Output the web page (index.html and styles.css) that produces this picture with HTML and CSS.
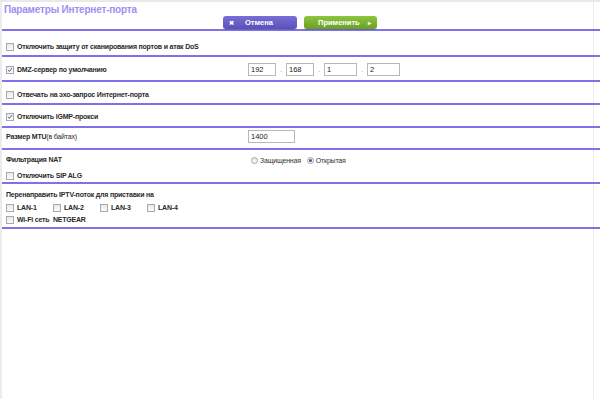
FILE: index.html
```html
<!DOCTYPE html>
<html lang="ru">
<head>
    <meta charset="UTF-8">
    <title>Параметры Интернет-порта</title>
    <link rel="stylesheet" href="styles.css">
</head>
<body>
    <div class="page">
        <div class="header">
            <h1 class="title">Параметры Интернет-порта</h1>
            <div class="button-bar">
                <button class="btn btn-cancel"><span class="btn-icon">&#x2716;</span>Отмена</button>
                <button class="btn btn-apply">Применить<span class="btn-arrow">&#x25B8;</span></button>
            </div>
        </div>

        <!-- DoS -->
        <div class="row row-dos">
            <label class="opt"><span class="check"></span>Отключить защиту от сканирования портов и атак DoS</label>
        </div>

        <!-- DMZ -->
        <div class="row row-dmz">
            <label class="opt"><span class="check on"><svg viewBox="0 0 8 8"><path d="M1.5 4.2 L3.2 6 L6.6 1.6" /></svg></span>DMZ-сервер по умолчанию</label>
            <div class="ip">
                <input class="field ip-a" type="text" value="192"><span class="dot">.</span>
                <input class="field ip-a" type="text" value="168"><span class="dot">.</span>
                <input class="field ip-b" type="text" value="1"><span class="dot">.</span>
                <input class="field ip-b" type="text" value="2">
            </div>
        </div>

        <div class="row row-echo">
            <label class="opt"><span class="check"></span>Отвечать на эхо-запрос Интернет-порта</label>
        </div>

        <div class="row row-igmp">
            <label class="opt"><span class="check on"><svg viewBox="0 0 8 8"><path d="M1.5 4.2 L3.2 6 L6.6 1.6" /></svg></span>Отключить IGMP-прокси</label>
        </div>

        <div class="row row-mtu">
            <span class="label">Размер MTU<span class="light">(в байтах)</span></span>
            <input class="field mtu" type="text" value="1400">
        </div>

        <!-- NAT -->
        <div class="row row-nat">
            <div class="nat-top">
                <span class="label">Фильтрация NAT</span>
                <div class="radios">
                    <label class="radio-opt"><span class="radio"></span>Защищенная</label>
                    <label class="radio-opt"><span class="radio on"></span>Открытая</label>
                </div>
            </div>
            <label class="opt"><span class="check"></span>Отключить SIP ALG</label>
        </div>

        <!-- IPTV -->
        <div class="row row-iptv">
            <span class="label">Перенаправить IPTV-поток для приставки на</span>
            <div class="lan-list">
                <label class="opt lan"><span class="check"></span>LAN-1</label>
                <label class="opt lan"><span class="check"></span>LAN-2</label>
                <label class="opt lan"><span class="check"></span>LAN-3</label>
                <label class="opt lan"><span class="check"></span>LAN-4</label>
            </div>
            <label class="opt"><span class="check"></span>Wi-Fi сеть&nbsp; NETGEAR</label>
        </div>
    </div>
</body>
</html>
```

FILE: styles.css
```css
:root {
    --line: #7d72ec;
    --title: #9d90f2;
    --text: #2a2a2a;
    --box: #b8b8b8;
}

* {
    margin: 0;
    padding: 0;
    box-sizing: border-box;
}

body {
    background: #fff;
    font-family: 'Liberation Sans', Arial, sans-serif;
    font-size: 7px;
    letter-spacing: -0.2px;
    color: var(--text);
}

.page {
    min-height: 399px;
    border-top: 2px solid #e9e9e9;
    border-left: 2px solid #ececec;
    box-shadow: inset -6px 0 0 #fff, inset -7px 0 0 #ececec;
}

.header {
    height: 29px;
    padding: 2px 0 0 2px;
    border-bottom: 2px solid var(--line);
}

.title {
    font-size: 10px;
    font-weight: bold;
    color: var(--title);
    line-height: 11px;
    letter-spacing: -0.2px;
}

.button-bar {
    display: flex;
    justify-content: center;
    gap: 7px;
    padding-right: 4px;
    margin-top: 1px;
}

.btn {
    height: 13px;
    border: none;
    border-radius: 3px;
    color: #fff;
    font-family: 'Liberation Sans', Arial, sans-serif;
    font-size: 7.5px;
    font-weight: bold;
    display: flex;
    align-items: center;
    box-shadow: 0 1px 0 rgba(0, 0, 0, 0.15);
}

.btn-cancel {
    width: 74px;
    padding-left: 6px;
    background: linear-gradient(#7a6fd6, #5b4fb8);
}

.btn-icon {
    font-size: 6px;
    margin-right: 11px;
}

.btn-apply {
    width: 73px;
    padding-left: 14px;
    background: linear-gradient(#8cc63f, #6a9f25);
}

.btn-arrow {
    font-size: 6px;
    margin-left: 8px;
}

.row {
    border-bottom: 2px solid var(--line);
    padding-left: 4px;
}

.row-dos { height: 26px; padding-top: 10px; }
.row-dmz { height: 25px; padding-top: 6px; display: grid; grid-template-columns: 242px 1fr; align-items: center; align-content: start; }
.row-echo { height: 23px; padding-top: 7px; }
.row-igmp { height: 23px; padding-top: 6px; }
.row-mtu { height: 22px; padding-top: 2px; display: grid; grid-template-columns: 242px 1fr; align-items: center; align-content: start; }
.row-nat { height: 34px; padding-top: 4px; }
.row-iptv { height: 45px; padding-top: 5px; }

.opt {
    display: flex;
    align-items: center;
    font-weight: bold;
    height: 12px;
    line-height: 12px;
}

.check {
    width: 8px;
    height: 8px;
    margin-right: 3px;
    border: 1px solid #a9a9a9;
    background: linear-gradient(#e9e9e9, #fbfbfb);
    display: inline-block;
    flex-shrink: 0;
}

.check svg {
    display: block;
    width: 6px;
    height: 6px;
    fill: none;
    stroke: #3b5fb0;
    stroke-width: 1.3;
}

.label {
    font-weight: bold;
    line-height: 12px;
}

.light {
    font-weight: normal;
}

.ip {
    display: flex;
    align-items: center;
}

.field {
    height: 13px;
    border: 1px solid var(--box);
    font-family: 'Liberation Sans', Arial, sans-serif;
    font-size: 7.5px;
    color: #222;
    padding-left: 2px;
    background: #fff;
    outline: none;
}

.ip-a { width: 28px; }
.ip-b { width: 33px; }

.dot {
    width: 10px;
    text-align: center;
    color: #888;
}

.mtu { width: 47px; }

.nat-top {
    display: grid;
    grid-template-columns: 242px 1fr;
    align-items: center;
    margin-bottom: 4px;
}

.radios {
    display: flex;
    gap: 6px;
    padding-left: 3px;
}

.radio-opt {
    display: flex;
    align-items: center;
    color: #333;
}

.radio {
    width: 7px;
    height: 7px;
    border-radius: 50%;
    border: 1px solid #a5a5a5;
    background: linear-gradient(#e4e4e4, #fafafa);
    margin-right: 2px;
    position: relative;
}

.radio.on::after {
    content: '';
    position: absolute;
    left: 1px;
    top: 1px;
    width: 3px;
    height: 3px;
    border-radius: 50%;
    background: #2f5fa8;
}

.lan-list {
    display: flex;
    margin-top: 1px;
}

.lan {
    width: 47px;
}
```
